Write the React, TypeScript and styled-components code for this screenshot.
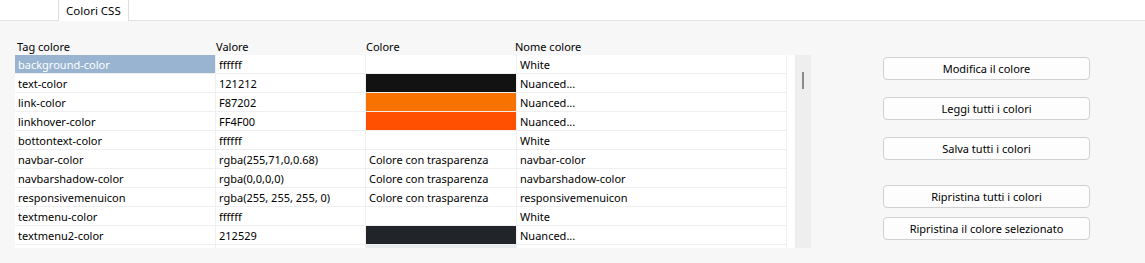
import React from "react";
import styled, { createGlobalStyle } from "styled-components";

const Global = createGlobalStyle`
  html, body { margin: 0; padding: 0; }
  body {
    background: #f7f7f7;
    font-family: "Noto Sans", "Open Sans", sans-serif;
    font-size: 11px;
    color: #000;
  }
`;

const Page = styled.div`
  width: 1145px;
  height: 263px;
  background: #f7f7f7;
  overflow: hidden;
`;

const TabBar = styled.div`
  height: 20px;
  background: #ffffff;
  border-bottom: 1px solid #e3e3e3;
  padding-left: 58px;
  display: flex;
  align-items: flex-start;
`;

const Tab = styled.div`
  height: 21px;
  box-sizing: border-box;
  background: #ffffff;
  border-left: 1px solid #dedede;
  border-right: 1px solid #dedede;
  padding: 0 7px;
  display: flex;
  align-items: center;
  font-size: 11.5px;
`;

const Body = styled.div`
  display: flex;
  padding: 16px 0 0 15px;
`;

const Left = styled.div`
  display: flex;
  flex-direction: column;
`;

const HeaderRow = styled.div`
  display: grid;
  grid-template-columns: 201px 150px 149px 200px;
  height: 18px;
  align-items: center;
`;

const HeaderCell = styled.div<{ $offset: number }>`
  padding-left: ${(p) => p.$offset}px;
  white-space: nowrap;
`;

const TableWrap = styled.div`
  display: flex;
  height: 193px;
  background: #ffffff;
  overflow: hidden;
`;

const Grid = styled.div`
  display: flex;
  flex-direction: column;
  width: 772px;
`;

const Row = styled.div`
  display: grid;
  grid-template-columns: 201px 150px 151px 270px;
  flex: none;
`;

const Cell = styled.div<{ $selected?: boolean; $swatch?: string }>`
  height: 18px;
  border-bottom: 1px solid #efefef;
  border-right: 1px solid #efefef;
  display: flex;
  align-items: center;
  padding-left: 3px;
  white-space: nowrap;
  overflow: hidden;
  background: ${(p) => (p.$selected ? "#99b4d1" : p.$swatch ? p.$swatch : "#ffffff")};
  color: ${(p) => (p.$selected ? "#ffffff" : "#000000")};
`;

const Gutter = styled.div`
  width: 8px;
  background: #ffffff;
`;

const ScrollTrack = styled.div`
  width: 16px;
  background: #eeeeee;
  position: relative;
`;

const ScrollThumb = styled.div`
  position: absolute;
  left: 7px;
  top: 17px;
  width: 2px;
  height: 17px;
  background: #8a8a8a;
`;

const Buttons = styled.div`
  display: flex;
  flex-direction: column;
  padding: 20px 0 0 72px;
`;

const Button = styled.button<{ $gap: number }>`
  width: 207px;
  height: 23px;
  margin-top: ${(p) => p.$gap}px;
  background: #fdfdfd;
  border: 1px solid #d0d0d0;
  border-radius: 4px;
  font-family: "Noto Sans", "Open Sans", sans-serif;
  font-size: 11px;
  color: #000;
  padding: 0;
  display: flex;
  align-items: center;
  justify-content: center;
`;

type RowData = { tag: string; value: string; swatch?: string; colore?: string; nome: string };

const rows: RowData[] = [
  { tag: "background-color", value: "ffffff", swatch: "#ffffff", nome: "White" },
  { tag: "text-color", value: "121212", swatch: "#121212", nome: "Nuanced..." },
  { tag: "link-color", value: "F87202", swatch: "#F87202", nome: "Nuanced..." },
  { tag: "linkhover-color", value: "FF4F00", swatch: "#FF4F00", nome: "Nuanced..." },
  { tag: "bottontext-color", value: "ffffff", swatch: "#ffffff", nome: "White" },
  { tag: "navbar-color", value: "rgba(255,71,0,0.68)", colore: "Colore con trasparenza", nome: "navbar-color" },
  { tag: "navbarshadow-color", value: "rgba(0,0,0,0)", colore: "Colore con trasparenza", nome: "navbarshadow-color" },
  { tag: "responsivemenuicon", value: "rgba(255, 255, 255, 0)", colore: "Colore con trasparenza", nome: "responsivemenuicon" },
  { tag: "textmenu-color", value: "ffffff", swatch: "#ffffff", nome: "White" },
  { tag: "textmenu2-color", value: "212529", swatch: "#212529", nome: "Nuanced..." },
  { tag: "", value: "", swatch: "#e9ecef", nome: "" },
];

const buttons: [string, number][] = [
  ["Modifica il colore", 0],
  ["Leggi tutti i colori", 17],
  ["Salva tutti i colori", 17],
  ["Ripristina tutti i colori", 25],
  ["Ripristina il colore selezionato", 9],
];

export default function App() {
  return (
    <Page>
      <Global />
      <TabBar>
        <Tab>Colori CSS</Tab>
      </TabBar>
      <Body>
        <Left>
          <HeaderRow>
            <HeaderCell $offset={2}>Tag colore</HeaderCell>
            <HeaderCell $offset={0}>Valore</HeaderCell>
            <HeaderCell $offset={0}>Colore</HeaderCell>
            <HeaderCell $offset={0}>Nome colore</HeaderCell>
          </HeaderRow>
          <TableWrap>
            <Grid>
              {rows.map((r, i) => (
                <Row key={i}>
                  <Cell $selected={i === 0}>{r.tag}</Cell>
                  <Cell>{r.value}</Cell>
                  <Cell $swatch={r.swatch}>{r.colore ?? ""}</Cell>
                  <Cell>{r.nome}</Cell>
                </Row>
              ))}
            </Grid>
            <Gutter />
            <ScrollTrack>
              <ScrollThumb />
            </ScrollTrack>
          </TableWrap>
        </Left>
        <Buttons>
          {buttons.map(([label, gap]) => (
            <Button key={label} $gap={gap}>
              {label}
            </Button>
          ))}
        </Buttons>
      </Body>
    </Page>
  );
}
